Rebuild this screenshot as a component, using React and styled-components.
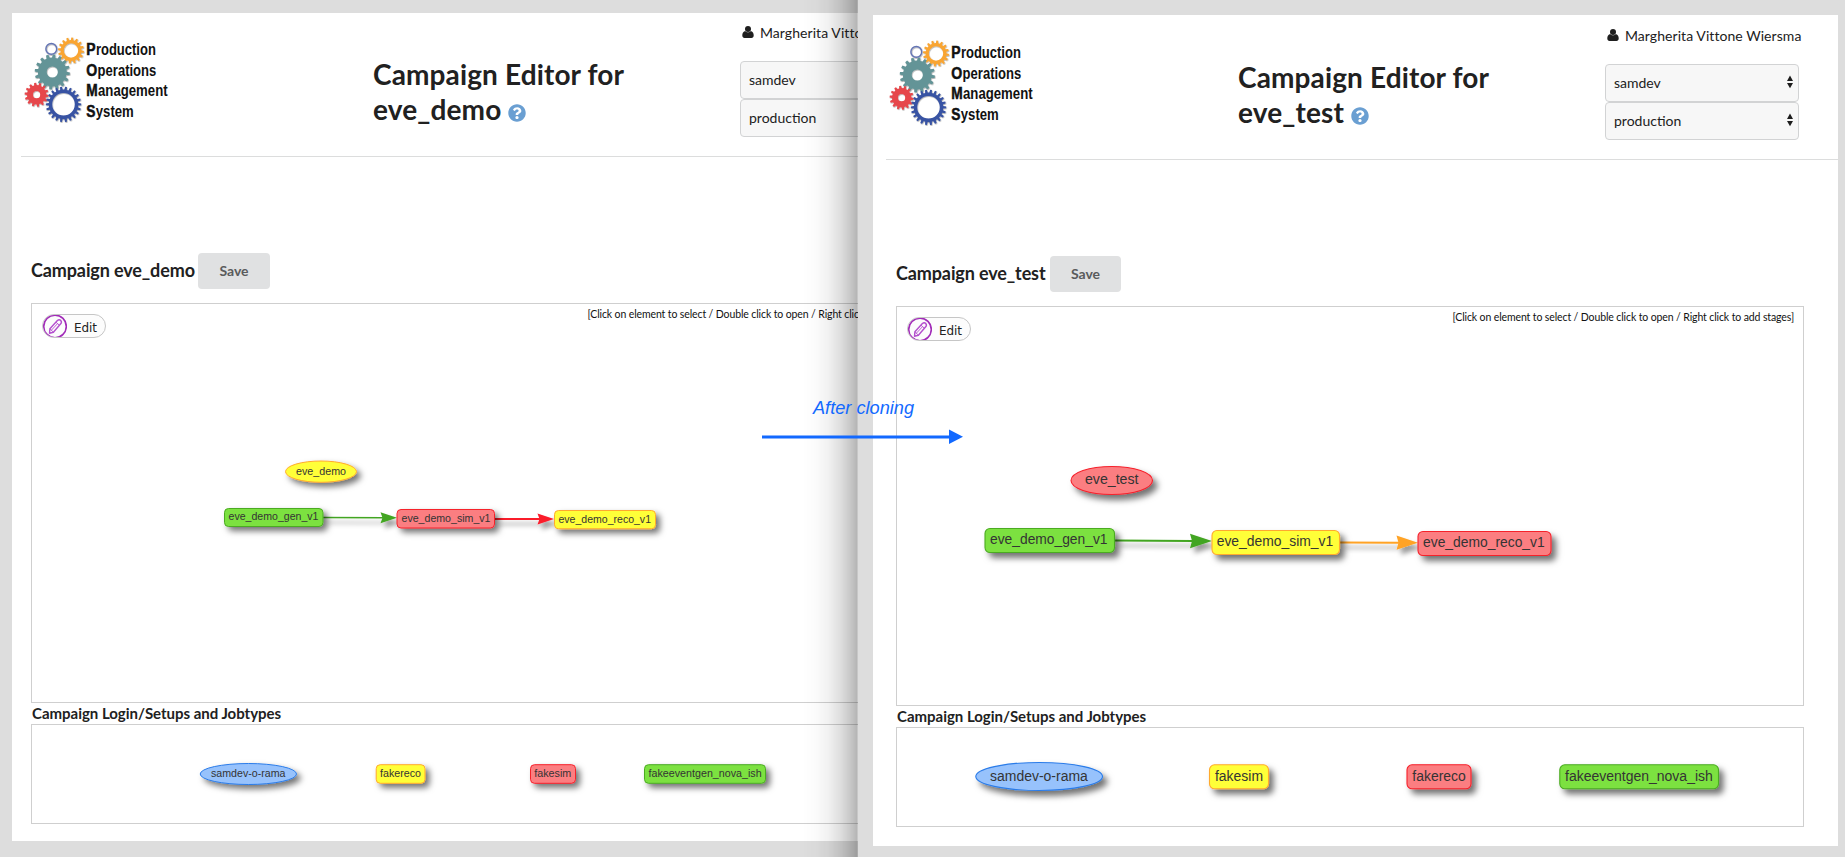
import React from "react";
import styled, { createGlobalStyle } from "styled-components";
import { FaQuestionCircle } from "react-icons/fa";

const GlobalStyle = createGlobalStyle`
  * { box-sizing: border-box; }
  body {
    margin: 0;
    background: #dddddd;
    color: #212121;
    font-family: Lato, "Liberation Sans", sans-serif;
    font-size: 14px;
  }
`;

const Desktop = styled.div`
  position: relative;
  display: grid;
  grid-template-columns: 858px 987px;
  width: 1845px;
  height: 857px;
  overflow: hidden;
`;

const Window = styled.section`
  position: relative;
  display: flex;
  min-width: 0;
  overflow: hidden;
  background: #dddddd;
  padding: ${(p) => p.$frame};
`;

const Sheet = styled.div`
  flex: 1 0 ${(p) => p.$width}px;
  background: #fff;
  padding: ${(p) => p.$inset};
`;

const WindowShadow = styled.div`
  position: absolute;
  top: 0;
  right: 0;
  width: 56px;
  height: 100%;
  pointer-events: none;
  border-right: 1px solid rgba(0, 0, 0, 0.22);
  background: linear-gradient(
    to right,
    rgba(0, 0, 0, 0),
    rgba(0, 0, 0, 0.015) 25%,
    rgba(0, 0, 0, 0.055) 48%,
    rgba(0, 0, 0, 0.13) 70%,
    rgba(0, 0, 0, 0.21) 87%,
    rgba(0, 0, 0, 0.29)
  );
`;

const Header = styled.header`
  display: grid;
  grid-template-columns: 352px 367px 1fr;
  height: 144px;
  border-bottom: 1px solid #dcdddd;
`;

const LogoSlot = styled.div`
  padding-top: 17px;
  svg { display: block; overflow: visible; }
`;

const PageTitle = styled.h1`
  margin: 0;
  padding-top: 44px;
  width: 290px;
  font-size: 28px;
  line-height: 35px;
  font-weight: 700;
  letter-spacing: 0.13px;
  svg {
    width: 18px;
    height: 18px;
    margin-left: 0;
    color: #6a9fd2;
    vertical-align: -2px;
  }
`;

const Account = styled.div`
  display: flex;
  flex-direction: column;
  padding-top: 10px;
`;

const UserName = styled.div`
  display: flex;
  align-items: center;
  gap: 6px;
  height: 18px;
  margin: 0 0 20px 2px;
  white-space: nowrap;
  letter-spacing: 0.06px;
`;

const SelectBox = styled.div`
  display: flex;
  align-items: center;
  justify-content: space-between;
  width: 194px;
  height: 38px;
  padding: 0 4px 2px 8px;
  border: 1px solid #d2d3d4;
  border-radius: 4px;
  background: #f7f7f7;
`;

const Editor = styled.main`
  width: 918px;
  padding: 96px 0 0 10px;
`;

const TitleRow = styled.div`
  display: flex;
  align-items: center;
  height: 36px;
  margin-bottom: 14px;
`;

const CampaignName = styled.h2`
  margin: 0;
  padding-bottom: 2px;
  width: ${(p) => p.$width}px;
  font-size: 18px;
  line-height: 24px;
  font-weight: 700;
  letter-spacing: -0.12px;
  white-space: nowrap;
`;

const SaveButton = styled.button`
  width: ${(p) => p.$width}px;
  height: 36px;
  padding: 0 0 2px;
  border: 0;
  border-radius: 4px;
  background: #e0e1e2;
  color: #5a5b5c;
  font: 700 14px Lato, sans-serif;
`;

const Panel = styled.div`
  position: relative;
  width: 908px;
  height: ${(p) => p.$height}px;
  border: 1px solid #cfcfcf;
  > svg { display: block; }
`;

const PanelBar = styled.div`
  position: absolute;
  inset: 0 0 auto 0;
  display: flex;
  justify-content: space-between;
  padding: 10px 9px 0 10px;
`;

const EditButton = styled.div`
  display: flex;
  align-items: center;
  gap: 7px;
  width: 64px;
  height: 24px;
  border: 1px solid #c6c6c6;
  border-radius: 12px;
  overflow: hidden;
  background: #fcfcfc;
  font: 12px "DejaVu Sans", Verdana, sans-serif;
  color: #222;
  span { padding-top: 3px; letter-spacing: -0.1px; }
  svg { flex: none; }
`;

const Hint = styled.div`
  margin-top: -7px;
  font-size: 10.5px;
  line-height: 14px;
  letter-spacing: -0.115px;
  color: #111;
  white-space: nowrap;
`;

const SectionLabel = styled.h4`
  margin: 0 0 0 1px;
  height: 21px;
  font-size: 15px;
  line-height: 20px;
  font-weight: 700;
  letter-spacing: -0.02px;
`;

const Annotation = styled.div`
  position: absolute;
  left: 760px;
  top: 394px;
  svg { display: block; }
`;

const palette = {
  yellow: ["#ffff38", "#ffa92e"],
  green: ["#7be141", "#4bab22"],
  red: ["#fb7e81", "#f6202b"],
  blue: ["#97c2fc", "#2b7ce9"],
};

function gearPath(cx, cy, outer, inner, hole, teeth, turn = 0) {
  const step = (Math.PI * 2) / teeth;
  const at = (r, a) => `${(cx + r * Math.cos(a)).toFixed(2)} ${(cy + r * Math.sin(a)).toFixed(2)}`;
  let d = "";
  for (let i = 0; i < teeth; i++) {
    const a = i * step + turn;
    d += `${i ? "L" : "M"}${at(inner, a - step * 0.3)}L${at(outer, a - step * 0.18)}L${at(outer, a + step * 0.18)}L${at(inner, a + step * 0.3)}`;
  }
  return `${d}ZM${cx - hole} ${cy}a${hole} ${hole} 0 1 0 ${hole * 2} 0a${hole} ${hole} 0 1 0 ${-hole * 2} 0Z`;
}

const gears = [
  { color: "#f9a533", args: [50, 20.5, 13, 10.4, 7.2, 16, 0.1] },
  { color: "#649497", args: [31.3, 42, 17.6, 14.4, 5.6, 16, 0.1] },
  { color: "#e6474b", args: [15.6, 64.7, 12, 9.6, 3.6, 14, 0.1] },
  { color: "#3752a3", args: [42.5, 74.3, 17.7, 14.7, 11.3, 22, 0] },
];

const logoWords = [
  ["P", "roduction", 25.3, 60],
  ["O", "perations", 45.7, 58.7],
  ["M", "anagement", 66.1, 69.6],
  ["S", "ystem", 86.9, 38],
];

const initialWidth = { P: 9.3, O: 11, M: 11.4, S: 9.2 };

function Logo() {
  return (
    <svg width="152" height="96" viewBox="0 0 152 96" fontFamily='"Liberation Sans", Arial, sans-serif' fontWeight="700" fontSize="15.6">
      <defs>
        <filter id="gearShade" x="-20%" y="-20%" width="150%" height="150%">
          <feDropShadow dx="0.5" dy="0.7" stdDeviation="0.6" floodOpacity="0.4" />
        </filter>
      </defs>
      <g filter="url(#gearShade)">
        <circle cx="30.3" cy="18.9" r="5.4" fill="none" stroke="#6474b4" strokeWidth="1.4" />
        {gears.map((g) => (
          <path key={g.color} d={gearPath(...g.args)} fill={g.color} fillRule="evenodd" />
        ))}
      </g>
      {logoWords.map(([first, rest, y, width]) => (
        <g key={first} fill="#111">
          <text x="65.3" y={y} textLength={initialWidth[first]} lengthAdjust="spacingAndGlyphs" stroke="#111" strokeWidth="0.5">{first}</text>
          <text x={65.3 + initialWidth[first] + 0.3} y={y} textLength={width} lengthAdjust="spacingAndGlyphs">{rest}</text>
        </g>
      ))}
    </svg>
  );
}

function UserIcon() {
  return (
    <svg width="12" height="12" viewBox="0 0 12 12" fill="#1f1f1f">
      <circle cx="6" cy="3" r="3" />
      <path d="M3.1 4.9C1 5.4 0.3 7.4 0.3 9.6C0.3 11.2 1.2 12 2.5 12H9.5C10.8 12 11.7 11.2 11.7 9.6C11.7 7.4 11 5.4 8.9 4.9C8.1 5.8 7.2 6.3 6 6.3C4.8 6.3 3.9 5.8 3.1 4.9Z" />
    </svg>
  );
}

function Stepper() {
  return (
    <svg width="8" height="14" viewBox="0 0 8 14" fill="#1d1d1d">
      <path d="M4 0.5L7 6H1ZM4 13.3L1 8H7Z" />
    </svg>
  );
}

function PencilIcon() {
  return (
    <svg width="24" height="24" viewBox="0 0 24 24" fill="none" stroke="#a12bb8">
      <circle cx="12" cy="12.4" r="11.3" strokeWidth="1.6" />
      <g strokeWidth="1.4" stroke="#b44fce" strokeLinejoin="round">
        <path d="M6.5 19.2L6.9 14.8L14.4 6.5Q16.1 5 17.7 6.4Q19.2 8 17.7 9.8L10.4 18.2Z" />
        <path d="M13 8.2L16.2 11.1M8.2 16.4L14.6 9.6M6.9 14.8L10.4 18.2" strokeWidth="0.9" />
      </g>
    </svg>
  );
}

function Node({ x, y, w, h, tone, shape, label, tx, tw, base, size }) {
  const [fill, stroke] = palette[tone];
  return (
    <g>
      <g filter={`url(#nodeShade${size > 12 ? "Large" : "Small"})`} fill={fill} stroke={stroke} strokeWidth={size > 12 ? 1.1 : 1}>
        {shape === "ellipse" ? (
          <ellipse cx={x + w / 2} cy={y + h / 2} rx={w / 2 - 0.5} ry={h / 2 - 0.5} />
        ) : (
          <rect x={x + 0.5} y={y + 0.5} width={w - 1} height={h - 1} rx={size > 12 ? 5 : 4} />
        )}
      </g>
      <text x={tx} y={base} fontSize={size} textLength={tw} lengthAdjust="spacingAndGlyphs" fill="#343434">{label}</text>
    </g>
  );
}

function Edge({ x1, y1, x2, y2, color, line, head }) {
  const back = x2 - head;
  const half = head * 0.33;
  return (
    <g filter="url(#edgeShade)">
      <path d={`M${x1} ${y1}L${back + 3} ${y2}`} stroke={color} strokeWidth={line} />
      <path d={`M${x2} ${y2}L${back} ${y2 - half}L${back + 2} ${y2}L${back} ${y2 + half}Z`} fill={color} />
    </g>
  );
}

function Diagram({ origin, height, nodes, edges = [], size }) {
  return (
    <svg width="906" height={height} viewBox={`${origin[0]} ${origin[1]} 906 ${height}`} fontFamily='"Liberation Sans", Arial, sans-serif'>
      <defs>
        <filter id="nodeShadeSmall" x="-20%" y="-40%" width="150%" height="220%">
          <feDropShadow dx="4" dy="4" stdDeviation="3" floodOpacity="0.55" />
        </filter>
        <filter id="nodeShadeLarge" x="-20%" y="-40%" width="150%" height="220%">
          <feDropShadow dx="4.5" dy="5" stdDeviation="3" floodOpacity="0.55" />
        </filter>
        <filter id="edgeShade" x="-20%" y="-100%" width="140%" height="400%">
          <feDropShadow dx="4" dy="5" stdDeviation="2.4" floodOpacity="0.4" />
        </filter>
      </defs>
      {edges.map((e) => <Edge key={e.color} {...e} />)}
      {nodes.map((n) => <Node key={n.label} size={size} {...n} />)}
    </svg>
  );
}

const demo = {
  name: "eve_demo",
  nameWidth: 167,
  saveWidth: 72,
  textSize: 10.8,
  canvasOrigin: [32, 304],
  trayOrigin: [32, 725],
  stages: [
    { label: "eve_demo", shape: "ellipse", tone: "yellow", x: 285, y: 460.5, w: 72, h: 22.3, tx: 296, tw: 50, base: 474.6 },
    { label: "eve_demo_gen_v1", tone: "green", x: 224, y: 508, w: 99.5, h: 19, tx: 228.5, tw: 90, base: 520 },
    { label: "eve_demo_sim_v1", tone: "red", x: 396.5, y: 509, w: 98.5, h: 19.5, tx: 401.5, tw: 89, base: 522 },
    { label: "eve_demo_reco_v1", tone: "yellow", x: 554, y: 510, w: 102, h: 19.3, tx: 558.5, tw: 92.5, base: 523 },
  ],
  edges: [
    { x1: 323, y1: 517.4, x2: 397, y2: 517.8, color: "#43a520", line: 1.5, head: 16.5 },
    { x1: 495, y1: 519, x2: 554, y2: 519, color: "#fa1c2c", line: 2, head: 16.5 },
  ],
  setups: [
    { label: "samdev-o-rama", shape: "ellipse", tone: "blue", x: 199.7, y: 763, w: 97.3, h: 22, tx: 211, tw: 74.5, base: 776.8 },
    { label: "fakereco", tone: "yellow", x: 375.7, y: 764.2, w: 49.8, h: 19.6, tx: 380, tw: 41, base: 776.8 },
    { label: "fakesim", tone: "red", x: 530, y: 764.2, w: 46, h: 19.6, tx: 534.3, tw: 37, base: 776.8 },
    { label: "fakeeventgen_nova_ish", tone: "green", x: 644, y: 764.2, w: 122, h: 19.6, tx: 648.6, tw: 113, base: 776.8 },
  ],
};

const test = {
  name: "eve_test",
  nameWidth: 154,
  saveWidth: 71,
  textSize: 14,
  canvasOrigin: [897, 307],
  trayOrigin: [897, 728],
  stages: [
    { label: "eve_test", shape: "ellipse", tone: "red", x: 1070.5, y: 466, w: 82.5, h: 29, tx: 1085, tw: 53.5, base: 484 },
    { label: "eve_demo_gen_v1", tone: "green", x: 984.5, y: 528, w: 130.5, h: 25, tx: 990, tw: 117.5, base: 544 },
    { label: "eve_demo_sim_v1", tone: "yellow", x: 1211.5, y: 530, w: 128.5, h: 25, tx: 1216.7, tw: 116.5, base: 546 },
    { label: "eve_demo_reco_v1", tone: "red", x: 1417.5, y: 531, w: 134, h: 25, tx: 1423, tw: 121.7, base: 547 },
  ],
  edges: [
    { x1: 1115, y1: 540.4, x2: 1212, y2: 541, color: "#43a520", line: 2, head: 22 },
    { x1: 1340, y1: 542.4, x2: 1418, y2: 542.7, color: "#ffa326", line: 2, head: 21.5 },
  ],
  setups: [
    { label: "samdev-o-rama", shape: "ellipse", tone: "blue", x: 975.3, y: 762, w: 127.7, h: 29, tx: 990, tw: 97.8, base: 781 },
    { label: "fakesim", tone: "yellow", x: 1209, y: 764.3, w: 60, h: 25, tx: 1215, tw: 48, base: 781 },
    { label: "fakereco", tone: "red", x: 1406.5, y: 764.3, w: 65, h: 25, tx: 1412.3, tw: 53.5, base: 781 },
    { label: "fakeeventgen_nova_ish", tone: "green", x: 1559.3, y: 764.3, w: 159.7, h: 25, tx: 1565, tw: 147.8, base: 781 },
  ],
};

function CampaignEditor({ campaign }) {
  return (
    <>
      <Header>
        <LogoSlot><Logo /></LogoSlot>
        <PageTitle>
          Campaign Editor for {campaign.name} <FaQuestionCircle />
        </PageTitle>
        <Account>
          <UserName><UserIcon />Margherita Vittone Wiersma</UserName>
          <SelectBox>samdev<Stepper /></SelectBox>
          <SelectBox>production<Stepper /></SelectBox>
        </Account>
      </Header>
      <Editor>
        <TitleRow>
          <CampaignName $width={campaign.nameWidth}>Campaign {campaign.name}</CampaignName>
          <SaveButton $width={campaign.saveWidth}>Save</SaveButton>
        </TitleRow>
        <Panel $height={400}>
          <Diagram origin={campaign.canvasOrigin} height={398} nodes={campaign.stages} edges={campaign.edges} size={campaign.textSize} />
          <PanelBar>
            <EditButton><PencilIcon /><span>Edit</span></EditButton>
            <Hint>[Click on element to select / Double click to open / Right click to add stages]</Hint>
          </PanelBar>
        </Panel>
        <SectionLabel>Campaign Login/Setups and Jobtypes</SectionLabel>
        <Panel $height={100}>
          <Diagram origin={campaign.trayOrigin} height={98} nodes={campaign.setups} size={campaign.textSize} />
        </Panel>
      </Editor>
    </>
  );
}

export default function App() {
  return (
    <>
      <GlobalStyle />
      <Desktop>
        <Window $frame="13px 0 16px 12px">
          <Sheet $width={965} $inset="0 0 0 9px"><CampaignEditor campaign={demo} /></Sheet>
          <WindowShadow />
        </Window>
        <Window $frame="15px 7px 11px 15px">
          <Sheet $width={965} $inset="1px 0 0 13px"><CampaignEditor campaign={test} /></Sheet>
        </Window>
        <Annotation>
          <svg width="206" height="54" viewBox="760 394 206 54" fill="#1269ff">
            <text x="813" y="413.6" fontFamily='"Liberation Sans", Arial, sans-serif' fontStyle="italic" fontSize="17.5" textLength="101" lengthAdjust="spacingAndGlyphs">After cloning</text>
            <path d="M762 435.4H949V429.4L963 436.8L949 444V438.6H762Z" />
          </svg>
        </Annotation>
      </Desktop>
    </>
  );
}
